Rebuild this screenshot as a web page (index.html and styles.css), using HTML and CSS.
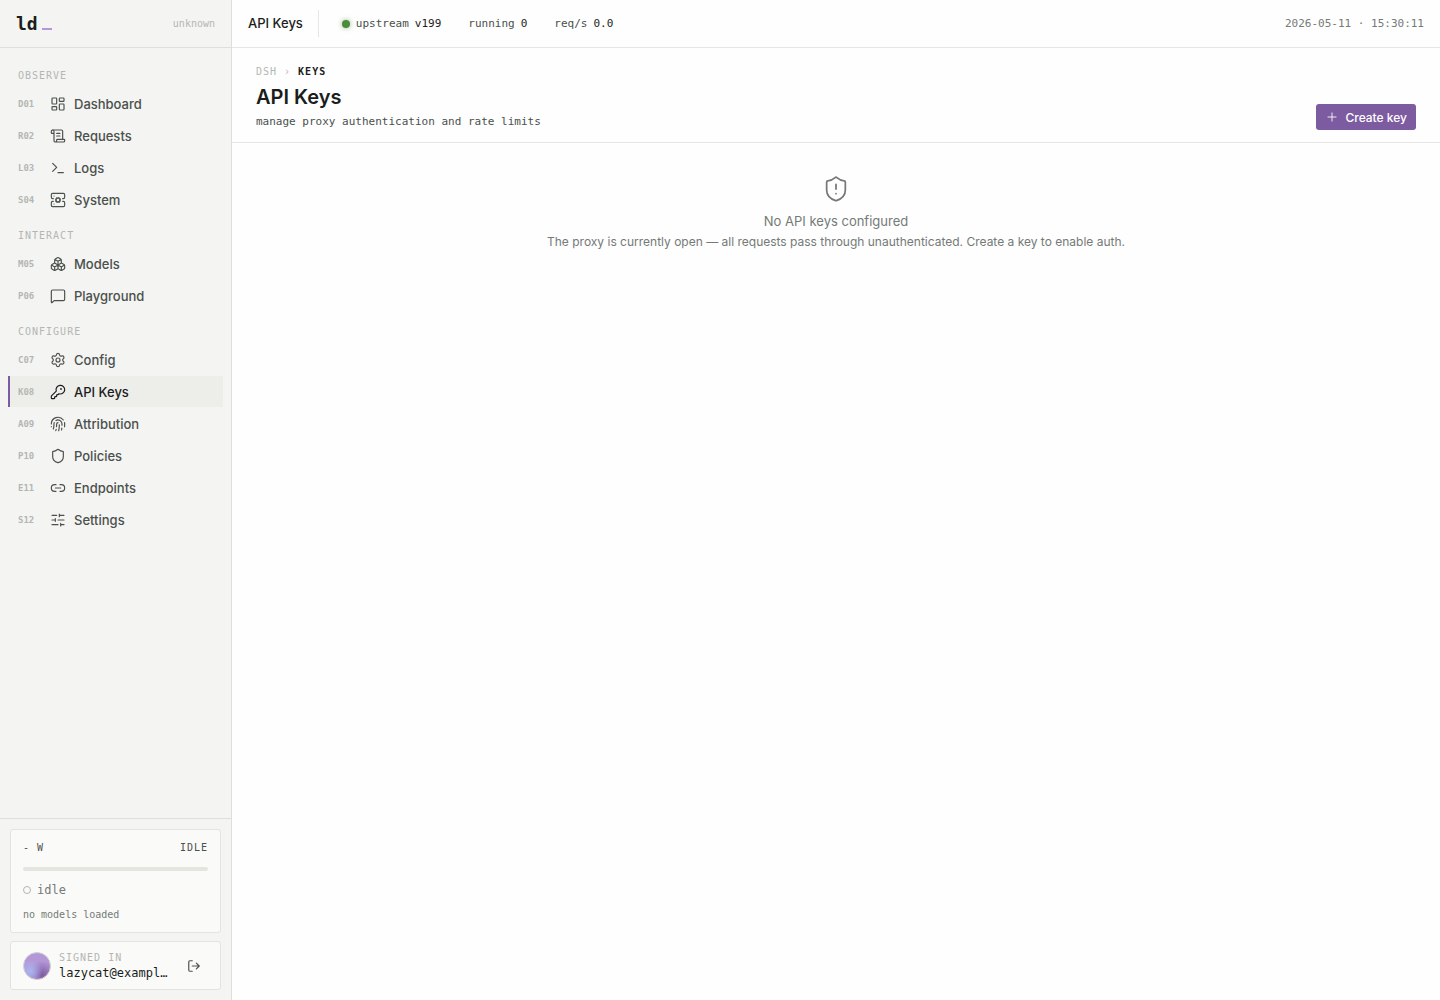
FILE: index.html
```html
<!DOCTYPE html>
<html lang="en">
<head>
<meta charset="utf-8">
<meta name="viewport" content="width=device-width, initial-scale=1">
<title>API Keys</title>
<link rel="stylesheet" href="styles.css">
</head>
<body>
<div class="app">
  <aside class="sidebar">
    <div class="brand">
      <a class="logo" href="#">ld<span class="cursor"></span></a>
      <span class="version">unknown</span>
    </div>
    <nav class="nav" aria-label="Main">
      <section class="group">
        <h2 class="label">OBSERVE</h2>
        <a class="item" href="#"><span class="code">D01</span><svg class="icon" viewBox="0 0 24 24"><rect width="7" height="9" x="3" y="3" rx="1"/><rect width="7" height="5" x="14" y="3" rx="1"/><rect width="7" height="9" x="14" y="12" rx="1"/><rect width="7" height="5" x="3" y="16" rx="1"/></svg>Dashboard</a>
        <a class="item" href="#"><span class="code">R02</span><svg class="icon" viewBox="0 0 24 24"><path d="M15 12h-5M15 8h-5M19 17V5a2 2 0 0 0-2-2H4"/><path d="M8 21h12a2 2 0 0 0 2-2v-1a1 1 0 0 0-1-1H11a1 1 0 0 0-1 1v1a2 2 0 1 1-4 0V5a2 2 0 1 0-4 0v2a1 1 0 0 0 1 1h3"/></svg>Requests</a>
        <a class="item" href="#"><span class="code">L03</span><svg class="icon" viewBox="0 0 24 24"><path d="m4 17 6-6-6-6M12 19h8"/></svg>Logs</a>
        <a class="item" href="#"><span class="code">S04</span><svg class="icon" viewBox="0 0 24 24"><path d="M5 10H4a2 2 0 0 1-2-2V4a2 2 0 0 1 2-2h16a2 2 0 0 1 2 2v4a2 2 0 0 1-2 2h-1M5 14H4a2 2 0 0 0-2 2v4a2 2 0 0 0 2 2h16a2 2 0 0 0 2-2v-4a2 2 0 0 0-2-2h-1M6 6h.01M6 18h.01"/><circle cx="12" cy="12" r="3"/><path d="m15.7 13.4-.9-.3M9.200 10.900l-.9-.3M10.600 15.700l.3-.9M13.600 15.700l-.4-1M10.800 9.300l-.4-1M8.300 13.600l1-.4M14.700 10.800l1-.4M13.400 8.300l-.3.9"/></svg>System</a>
      </section>
      <section class="group">
        <h2 class="label">INTERACT</h2>
        <a class="item" href="#"><span class="code">M05</span><svg class="icon" viewBox="0 0 24 24"><path d="M2.970 12.920A2 2 0 0 0 2 14.630v3.240a2 2 0 0 0 .97 1.710l3 1.800a2 2 0 0 0 2.060 0L12 19v-5.500l-5-3zM7 16.500l-4.740-2.850M7 16.500l5-3M7 16.500v5.170M12 13.500V19l3.970 2.380a2 2 0 0 0 2.060 0l3-1.800a2 2 0 0 0 .97-1.710v-3.240a2 2 0 0 0-.97-1.710L17 10.500zM17 16.500l-5-3M17 16.500l4.740-2.850M17 16.500v5.170M7.970 4.420A2 2 0 0 0 7 6.130v4.370l5 3 5-3V6.130a2 2 0 0 0-.97-1.710l-3-1.800a2 2 0 0 0-2.060 0zM12 8 7.260 5.150M12 8l4.740-2.850M12 13.500V8"/></svg>Models</a>
        <a class="item" href="#"><span class="code">P06</span><svg class="icon" viewBox="0 0 24 24"><path d="M22 17a2 2 0 0 1-2 2H6.828a2 2 0 0 0-1.414.586l-2.202 2.202A.71.71 0 0 1 2 21.286V5a2 2 0 0 1 2-2h16a2 2 0 0 1 2 2z"/></svg>Playground</a>
      </section>
      <section class="group">
        <h2 class="label">CONFIGURE</h2>
        <a class="item" href="#"><span class="code">C07</span><svg class="icon" viewBox="0 0 24 24"><path d="M9.671 4.136a2.340 2.340 0 0 1 4.659 0 2.340 2.340 0 0 0 3.319 1.915 2.340 2.340 0 0 1 2.330 4.033 2.340 2.340 0 0 0 0 3.831 2.340 2.340 0 0 1-2.330 4.033 2.340 2.340 0 0 0-3.319 1.915 2.340 2.340 0 0 1-4.659 0 2.340 2.340 0 0 0-3.320-1.915 2.340 2.340 0 0 1-2.330-4.033 2.340 2.340 0 0 0 0-3.831A2.340 2.340 0 0 1 6.350 6.051a2.340 2.340 0 0 0 3.319-1.915"/><circle cx="12" cy="12" r="3"/></svg>Config</a>
        <a class="item active" href="#" aria-current="page"><span class="code">K08</span><svg class="icon" viewBox="0 0 24 24"><path d="M2.586 17.414A2 2 0 0 0 2 18.828V21a1 1 0 0 0 1 1h3a1 1 0 0 0 1-1v-1a1 1 0 0 1 1-1h1a1 1 0 0 0 1-1v-1a1 1 0 0 1 1-1h.172a2 2 0 0 0 1.414-.586l.814-.814a6.500 6.500 0 1 0-4-4z"/><circle cx="16.500" cy="7.500" r=".5"/></svg>API Keys</a>
        <a class="item" href="#"><span class="code">A09</span><svg class="icon" viewBox="0 0 24 24"><path d="M12 10a2 2 0 0 0-2 2c0 1.020-.1 2.510-.26 4M14 13.120c0 2.380 0 6.380-1 8.880M17.290 21.020c.12-.6.430-2.300.5-3.020M2 12a10 10 0 0 1 18-6M2 16h.01M21.800 16c.2-2 .131-5.354 0-6M5 19.500C5.500 18 6 15 6 12a6 6 0 0 1 .34-2M8.650 22c.21-.66.450-1.320.570-2M9 6.800a6 6 0 0 1 9 5.200v2"/></svg>Attribution</a>
        <a class="item" href="#"><span class="code">P10</span><svg class="icon" viewBox="0 0 24 24"><path d="M20 13c0 5-3.500 7.500-7.660 8.950a1 1 0 0 1-.67-.01C7.500 20.500 4 18 4 13V6a1 1 0 0 1 1-1c2 0 4.500-1.200 6.240-2.720a1.170 1.170 0 0 1 1.520 0C14.510 3.810 17 5 19 5a1 1 0 0 1 1 1z"/></svg>Policies</a>
        <a class="item" href="#"><span class="code">E11</span><svg class="icon" viewBox="0 0 24 24"><path d="M9 17H7A5 5 0 0 1 7 7h2M15 7h2a5 5 0 1 1 0 10h-2M8 12h8"/></svg>Endpoints</a>
        <a class="item" href="#"><span class="code">S12</span><svg class="icon" viewBox="0 0 24 24"><path d="M10 5H3M12 19H3M14 3v4M16 17v4M21 12h-9M21 19h-5M21 5h-7M8 10v4M8 12H3"/></svg>Settings</a>
      </section>
    </nav>
    <div class="foot">
      <section class="card power">
        <div class="power-head"><span>- W</span><span>IDLE</span></div>
        <div class="meter"></div>
        <div class="state"><span class="ring"></span>idle</div>
        <div class="loaded">no models loaded</div>
      </section>
      <section class="card user">
        <span class="avatar"></span>
        <div class="who"><div class="who-label">SIGNED IN</div><div class="who-mail">lazycat@exampl…</div></div>
        <button class="logout" type="button" aria-label="Sign out"><svg class="icon-sm" viewBox="0 0 24 24"><path d="m16 17 5-5-5-5M21 12H9M9 21H5a2 2 0 0 1-2-2V5a2 2 0 0 1 2-2h4"/></svg></button>
      </section>
    </div>
  </aside>
  <div class="content">
    <header class="topbar">
      <span class="where">API Keys</span>
      <div class="stats">
        <span class="stat"><span class="dot"></span>upstream <b>v199</b></span>
        <span class="stat">running <b>0</b></span>
        <span class="stat">req/s <b>0.0</b></span>
      </div>
      <time class="clock">2026-05-11 · 15:30:11</time>
    </header>
    <main>
      <div class="page-head">
        <div>
          <nav class="crumbs" aria-label="Breadcrumb"><a href="#">DSH</a><span class="sep">›</span><b>KEYS</b></nav>
          <h1>API Keys</h1>
          <p class="sub">manage proxy authentication and rate limits</p>
        </div>
        <button class="create" type="button"><svg class="icon-sm" viewBox="0 0 24 24"><path d="M5 12h14M12 5v14"/></svg>Create key</button>
      </div>
      <div class="empty">
        <svg class="icon-lg" viewBox="0 0 24 24"><path d="M20 13c0 5-3.500 7.500-7.660 8.950a1 1 0 0 1-.67-.01C7.500 20.500 4 18 4 13V6a1 1 0 0 1 1-1c2 0 4.500-1.200 6.240-2.720a1.170 1.170 0 0 1 1.520 0C14.510 3.810 17 5 19 5a1 1 0 0 1 1 1zM12 8v4M12 16h.01"/></svg>
        <p class="empty-title">No API keys configured</p>
        <p class="empty-text">The proxy is currently open — all requests pass through unauthenticated. Create a key to enable auth.</p>
      </div>
    </main>
  </div>
</div>
</body>
</html>
```
FILE: styles.css
```css
:root {
  --sans: Inter, "Liberation Sans", sans-serif;
  --mono: "DejaVu Sans Mono", "Liberation Mono", monospace;
  --ink: #1b1d1b;
  --text: #4a504c;
  --muted: #747a76;
  --faint: #b3b7b3;
  --line: #e6e7e5;
  --accent: #7d5ba0;
}

* { box-sizing: border-box; }

body {
  margin: 0;
  font: 13px/20px var(--sans);
  color: var(--ink);
  background: #fefefe;
}

h1, h2, p { margin: 0; }
a { color: inherit; text-decoration: none; }
button { border: 0; font-family: inherit; cursor: pointer; }

svg {
  flex: none;
  fill: none;
  stroke: currentColor;
  stroke-width: 1.5;
  stroke-linecap: round;
  stroke-linejoin: round;
}

.icon { width: 16px; height: 16px; stroke-width: 1.75; }
.icon-sm { width: 14px; height: 14px; stroke-width: 2; }
.icon-lg { width: 28px; height: 28px; }

.app { display: flex; min-height: 100vh; }

.sidebar {
  position: sticky;
  top: 0;
  display: flex;
  flex-direction: column;
  flex: none;
  width: 232px;
  height: 100vh;
  border-right: 1px solid #dedfdc;
  background: #f4f4f2;
}

.brand {
  display: flex;
  align-items: center;
  justify-content: space-between;
  height: 48px;
  padding: 0 16px;
  border-bottom: 1px solid #dedfdc;
}

.logo {
  display: flex;
  align-items: baseline;
  gap: 4px;
  font: bold 18px/24px var(--mono);
}

.cursor { width: 10px; height: 2px; background: #b497d6; }
.version { font: 10px/15px var(--mono); color: var(--faint); }

.nav {
  display: flex;
  flex-direction: column;
  flex: 1;
  gap: 13px;
  min-height: 0;
  padding: 20px 8px;
  overflow: auto;
}

.group { display: flex; flex-direction: column; gap: 1px; }

.label {
  margin-bottom: 4px;
  padding: 0 10px;
  font: 10px/15px var(--mono);
  letter-spacing: 1px;
  color: var(--faint);
}

.item {
  display: flex;
  align-items: center;
  gap: 8px;
  height: 31px;
  padding: 0 8px;
  border-left: 2px solid transparent;
  font-weight: 500;
  color: var(--text);
}

.code { width: 24px; font: bold 9px/14px var(--mono); color: var(--faint); }
.active { border-color: var(--accent); background: #edeeea; color: var(--ink); }

.foot {
  display: flex;
  flex-direction: column;
  gap: 8px;
  padding: 10px;
  border-top: 1px solid #dedfdc;
}

.card { border: 1px solid #e3e4e1; border-radius: 3px; background: #fafaf8; }

.power { padding: 10px 12px; }

.power-head {
  display: flex;
  justify-content: space-between;
  font: 10px/15px var(--mono);
  letter-spacing: 1px;
  color: var(--text);
}

.meter { height: 4px; margin: 12px 0 10px; border-radius: 2px; background: #e4e5de; }

.state {
  display: flex;
  align-items: center;
  gap: 6px;
  font: 12px/18px var(--mono);
  color: var(--muted);
}

.ring { width: 8px; height: 8px; border: 1px solid var(--faint); border-radius: 50%; }
.loaded { margin-top: 8px; font: 10px/15px var(--mono); color: var(--muted); }

.user { display: flex; align-items: center; gap: 8px; padding: 8px 12px; }

.avatar {
  flex: none;
  width: 28px;
  height: 28px;
  border: 1px solid #d3d3d3;
  border-radius: 50%;
  background:
    radial-gradient(circle at 25% 70%, #a9b4f0, transparent 45%),
    radial-gradient(circle at 70% 85%, #7d5ba0, transparent 50%),
    #b497d6;
}

.who { flex: 1; min-width: 0; font-family: var(--mono); }
.who-label { font-size: 10px; line-height: 15px; letter-spacing: 1px; color: var(--faint); }
.who-mail { font-size: 12px; line-height: 16px; white-space: nowrap; }

.logout {
  display: grid;
  place-items: center;
  width: 28px;
  height: 28px;
  padding: 0;
  background: none;
  color: var(--text);
}

.content { flex: 1; min-width: 0; }

.topbar {
  display: flex;
  align-items: center;
  height: 48px;
  padding: 0 16px;
  border-bottom: 1px solid var(--line);
}

.where { padding-right: 15px; border-right: 1px solid var(--line); font-weight: 500; line-height: 27px; }

.stats { display: flex; gap: 27px; padding-left: 23px; }
.stat, .clock { font: 11px/16px var(--mono); color: var(--text); }
.stat { display: flex; align-items: center; gap: 6px; }
.stat b { font-weight: 500; color: var(--ink); }

.dot {
  width: 8px;
  height: 8px;
  border-radius: 50%;
  background: #4b8b3b;
  box-shadow: 0 0 5px #4b8b3b99;
}

.clock { margin-left: auto; color: var(--muted); }

.page-head {
  display: flex;
  align-items: flex-end;
  justify-content: space-between;
  padding: 16px 24px 12px;
  border-bottom: 1px solid var(--line);
}

.crumbs { display: flex; gap: 7px; font: 10px/15px var(--mono); letter-spacing: 1px; color: var(--faint); }
.crumbs b { color: var(--ink); }

h1 { margin: 5px 0 4px; font-size: 20px; font-weight: 600; line-height: 26px; }
.sub { font: 11px/16px var(--mono); color: var(--text); }

.create {
  display: flex;
  align-items: center;
  gap: 6px;
  height: 26px;
  padding: 0 9px;
  border-radius: 3px;
  background: var(--accent);
  font-size: 12px;
  font-weight: 500;
  color: #fff;
}

.create .icon-sm { stroke-width: 1.5; }

.empty {
  display: flex;
  flex-direction: column;
  align-items: center;
  padding: 32px 24px;
  text-align: center;
  color: var(--muted);
}

.empty-title { margin-top: 8px; }
.empty-text { margin-top: 2px; font-size: 12px; line-height: 18px; }
```
